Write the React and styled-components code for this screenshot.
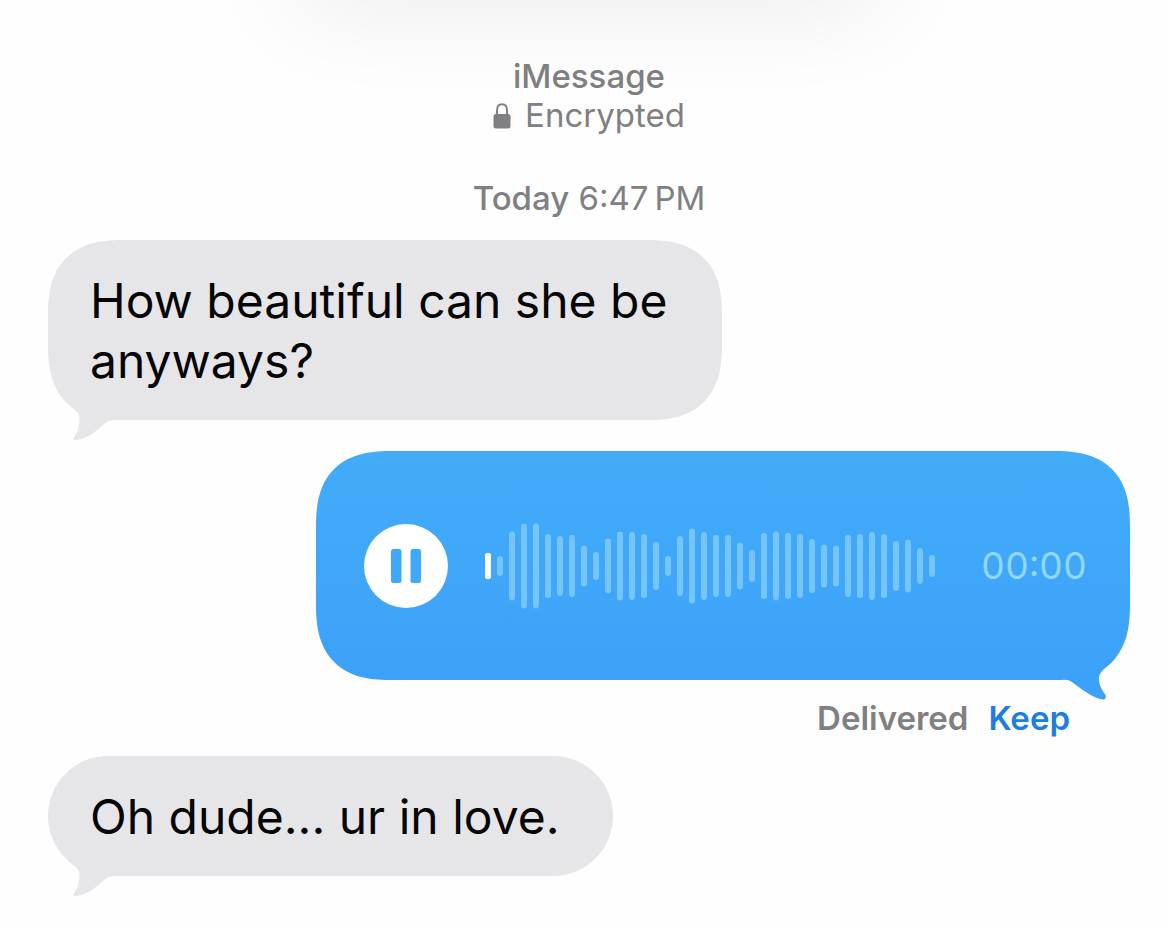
import React from "react";
import styled, { createGlobalStyle } from "styled-components";

const GlobalStyle = createGlobalStyle`
  * { box-sizing: border-box; }
  body {
    margin: 0;
    background: #fefefe;
    font-family: Inter, "Liberation Sans", sans-serif;
  }
`;

const Page = styled.main`
  position: relative;
  min-height: 100vh;
  overflow: hidden;
  padding: 57px 36px 48px 48px;
  display: flex;
  flex-direction: column;
`;

const TopShade = styled.div`
  position: absolute;
  top: -60px;
  left: 25%;
  right: 24%;
  height: 60px;
  border-radius: 30px;
  box-shadow: 0 0 100px rgba(0, 0, 0, 0.1);
`;

const Header = styled.header`
  display: flex;
  flex-direction: column;
  align-items: center;
  color: #808082;
  font-size: 33px;
  line-height: 39px;
`;

const Service = styled.div`
  font-weight: 500;
`;

const Encryption = styled.div`
  display: flex;
  align-items: center;
  gap: 14px;
`;

const Timestamp = styled.time`
  margin: 44px 0 22px;
`;

const Strong = styled.span`
  font-weight: 500;
`;

const Bubble = styled.div`
  position: relative;
  border-radius: 60px;

  @supports (corner-shape: superellipse(1.35)) {
    ${(p) =>
      p.$tall && "border-radius: 76px; corner-shape: superellipse(1.35);"}
  }
`;

const TextBubble = styled(Bubble)`
  align-self: flex-start;
  max-width: 674px;
  padding: 31px 54px 29px 42px;
  background: #e6e6e8;
  color: #050505;
  font-size: 48px;
  line-height: 60px;
`;

const VoiceBubble = styled(Bubble)`
  align-self: flex-end;
  display: flex;
  align-items: center;
  margin-top: 31px;
  min-height: 229px;
  padding: 0 43px 0 48px;
  background: linear-gradient(#43acf8, #3ca2f9);
`;

const Tail = styled.svg`
  position: absolute;
  bottom: -21px;
  ${(p) => (p.$side === "left" ? "left: 0;" : "right: 0;")}
  width: 72px;
  height: 62px;
`;

const PauseButton = styled.button`
  display: flex;
  align-items: center;
  justify-content: center;
  flex: none;
  width: 84px;
  height: 84px;
  padding: 0;
  border: 0;
  border-radius: 50%;
  background: #fff;
  cursor: pointer;
`;

const Wave = styled.svg`
  margin: 0 46px 0 37px;
`;

const Elapsed = styled.span`
  color: #90d8fe;
  font-size: 37px;
  font-weight: 400;
  font-variant-numeric: tabular-nums;
  line-height: 40px;
`;

const Status = styled.div`
  display: flex;
  justify-content: flex-end;
  gap: 20px;
  margin: 18px 0;
  padding-right: 60px;
  color: #808082;
  font-size: 33px;
  font-weight: 600;
  line-height: 40px;
`;

const KeepButton = styled.button`
  padding: 0;
  border: 0;
  background: none;
  color: #1c7ee0;
  font: inherit;
  cursor: pointer;
`;

const LEVELS = [
  26, 20, 69, 85, 85, 64, 60, 62, 41, 28, 55, 69, 68, 64, 48, 20, 60, 75, 68,
  62, 62, 47, 32, 66, 69, 66, 64, 54, 43, 41, 62, 64, 68, 64, 50, 53, 36, 22,
];

function LeftTail() {
  return (
    <Tail $side="left" viewBox="0 0 72 62" aria-hidden="true">
      <path
        fill="#e6e6e8"
        d="M10 12C13 19 18 23 24 28.500C28 32 31 34 31.500 38C32 46 30 53 25 60C25 61 26 61 28 61C36 60 42 57 48 52C53 48 58 42 65 41V20H20Z"
      />
    </Tail>
  );
}

function RightTail() {
  return (
    <Tail $side="right" viewBox="0 0 72 62" aria-hidden="true">
      <path
        fill="#3ca2f9"
        d="M59 16C56 22 51 26 46 30C42 34 40.500 37 41 41C41.500 48 45 52 47.500 56C48.500 59 47 61 44 60.500C34 58 26 52 18 46C14 43 12 41 7 41L8 32H40Z"
      />
    </Tail>
  );
}

function Waveform() {
  return (
    <Wave width="450" height="86" viewBox="0 0 450 86" aria-hidden="true">
      {LEVELS.map((h, i) => (
        <rect
          key={i}
          x={i * 12}
          y={(86 - h) / 2}
          width="6"
          height={h}
          rx={i === 0 ? 2 : 3}
          fill={i === 0 ? "#fff" : "#75c5fc"}
        />
      ))}
    </Wave>
  );
}

export default function App() {
  return (
    <>
      <GlobalStyle />
      <Page>
        <TopShade />
        <Header>
          <Service>iMessage</Service>
          <Encryption>
            <svg width="18" height="26" viewBox="0 0 18 26" aria-hidden="true">
              <path
                d="M4 12V7.500C4 3.500 6 1.200 9 1.200S14 3.500 14 7.500V12"
                fill="none"
                stroke="#808082"
                strokeWidth="2"
              />
              <rect x="0.500" y="11" width="17" height="14.500" rx="2.500" fill="#808082" />
            </svg>
            <span>Encrypted</span>
          </Encryption>
          <Timestamp>
            <Strong>Today</Strong> 6:47{"\u2009"}PM
          </Timestamp>
        </Header>

        <TextBubble $tall>
          How beautiful can she be anyways?
          <LeftTail />
        </TextBubble>

        <VoiceBubble $tall>
          <RightTail />
          <PauseButton aria-label="Pause">
            <svg width="30" height="34" viewBox="0 0 30 34" aria-hidden="true">
              <rect x="0" y="0" width="10.500" height="34" rx="2.500" fill="#40a8f8" />
              <rect x="19.500" y="0" width="10.500" height="34" rx="2.500" fill="#40a8f8" />
            </svg>
          </PauseButton>
          <Waveform />
          <Elapsed>00:00</Elapsed>
        </VoiceBubble>

        <Status>
          <span>Delivered</span>
          <KeepButton>Keep</KeepButton>
        </Status>

        <TextBubble>
          Oh dude... ur in love.
          <LeftTail />
        </TextBubble>
      </Page>
    </>
  );
}
